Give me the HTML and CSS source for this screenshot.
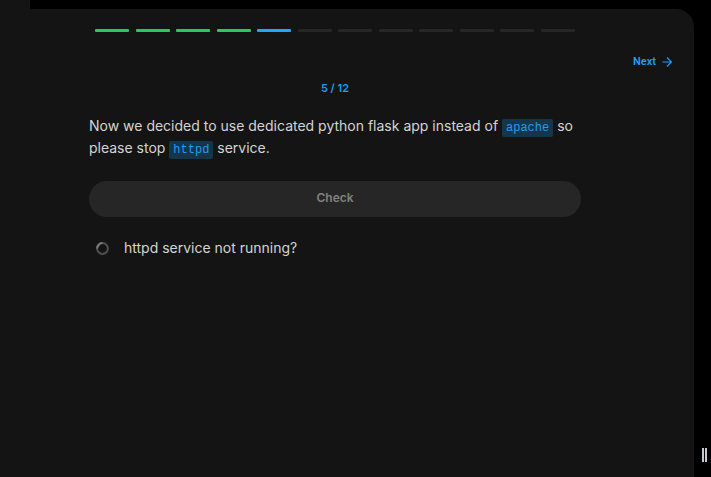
FILE: index.html
```html
<!DOCTYPE html>
<html lang="en">
<head>
<meta charset="utf-8">
<title>Lab question 5 of 12</title>
<link rel="stylesheet" href="styles.css">
</head>
<body>
<div class="tab-strip"><div class="tab"></div></div>
<div class="workspace">
  <main class="panel">
    <div class="progress">
      <span class="step done"></span>
      <span class="step done"></span>
      <span class="step done"></span>
      <span class="step done"></span>
      <span class="step current"></span>
      <span class="step"></span>
      <span class="step"></span>
      <span class="step"></span>
      <span class="step"></span>
      <span class="step"></span>
      <span class="step"></span>
      <span class="step"></span>
    </div>
    <nav class="pager">
      <a class="next" href="#">Next
        <svg class="arrow" viewBox="0 0 10 10" width="10" height="10" aria-hidden="true"><path d="M0.5 5H9M5 0.5L9.5 5L5 9.5"/></svg>
      </a>
    </nav>
    <section class="question">
      <p class="count">5 / 12</p>
      <p class="prompt">Now we decided to use dedicated python flask app instead of <code>apache</code> so please stop <code>httpd</code> service.</p>
      <button class="check" type="button" disabled>Check</button>
      <div class="task">
        <svg class="spinner" viewBox="0 0 13 13" width="13" height="13" aria-hidden="true"><circle class="ring" cx="6.5" cy="6.5" r="5.4"/><path class="arc" d="M1.1 6.5A5.4 5.4 0 0 1 6.5 1.1"/></svg>
        <span>httpd service not running?</span>
      </div>
    </section>
  </main>
  <div class="gutter"><div class="grip"></div></div>
</div>
</body>
</html>
```
FILE: styles.css
```css
* {
  box-sizing: border-box;
}

body {
  display: flex;
  flex-direction: column;
  min-height: 100vh;
  margin: 0;
  background: #000;
  color: #d4d4d4;
  font: 14px/22px Inter, "Liberation Sans", sans-serif;
}

p {
  margin: 0;
}

.tab-strip {
  height: 9px;
}

.tab {
  width: 30px;
  height: 100%;
  background: #141414;
}

.workspace {
  display: flex;
  flex: 1;
}

.panel {
  flex: 1;
  padding-top: 20px;
  border-radius: 0 18px 0 0;
  background: #141414;
}

.progress {
  display: flex;
  justify-content: space-between;
  margin: 0 119px 0 95px;
}

.step {
  width: 34px;
  height: 3px;
  border-radius: 1px;
  background: #262626;
}

.done {
  background: #2dc65f;
}

.current {
  background: #22a6f8;
}

.pager {
  display: flex;
  justify-content: flex-end;
  margin-top: 22px;
  padding-right: 22px;
}

.next {
  display: flex;
  align-items: center;
  gap: 6px;
  color: #1e9df0;
  font-family: Roboto, sans-serif;
  font-size: 11px;
  font-weight: 600;
  line-height: 16px;
  text-decoration: none;
}

.arrow {
  fill: none;
  stroke: currentColor;
  stroke-width: 1.2;
}

.question {
  margin: 10px 113px 0 89px;
}

.count {
  color: #1e9df0;
  font-size: 11px;
  font-weight: 600;
  line-height: 16px;
  text-align: center;
}

.prompt {
  margin-top: 19px;
}

code {
  padding: 2px 4px;
  border-radius: 2px;
  background: #15354b;
  color: #1e9df0;
  font: 12px "Liberation Mono", monospace;
}

.check {
  display: block;
  width: 100%;
  height: 36px;
  margin-top: 22px;
  padding: 0 0 2px;
  border: 0;
  border-radius: 18px;
  background: #262626;
  color: #818181;
  font: 600 12px/16px Inter, "Liberation Sans", sans-serif;
}

.task {
  display: flex;
  align-items: center;
  gap: 15px;
  margin-top: 20px;
  padding-left: 7px;
}

.spinner {
  fill: none;
  stroke-width: 2;
}

.ring {
  stroke: #505050;
}

.arc {
  stroke: #7c7c7c;
}

.gutter {
  display: flex;
  align-items: flex-end;
  justify-content: flex-end;
  width: 17px;
  padding: 0 4px 15px 0;
}

.grip {
  width: 5px;
  height: 14px;
  border: solid #c5c8d0;
  border-width: 0 2px;
}
```
